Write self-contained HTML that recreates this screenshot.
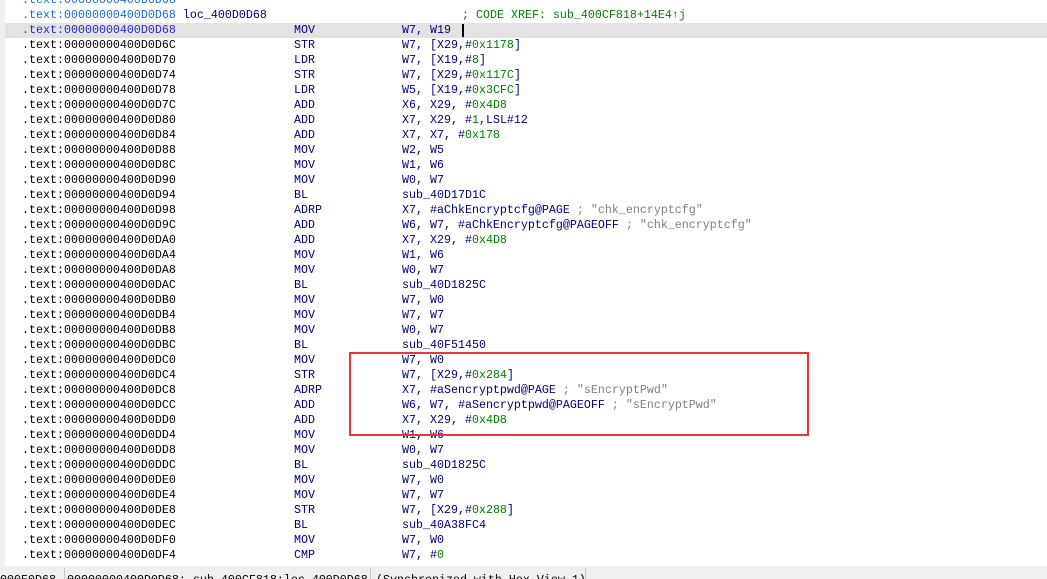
<!DOCTYPE html>
<html><head><meta charset="utf-8"><style>
html,body{margin:0;padding:0;}
body{width:1047px;height:579px;overflow:hidden;background:#fff;position:relative;font-family:"Liberation Mono",monospace;font-size:11.67px;}
.strip{position:absolute;left:0;top:0;width:5px;height:566px;background:#f0f0f0;}
.hl{position:absolute;left:5px;top:23px;width:1042px;height:15px;background:#e3e3e3;}
.r{position:absolute;height:15px;line-height:15px;white-space:pre;}
.a{left:22px;color:#000;}
.a1{color:#1a6bd6;}
.a2{color:#2a2ad0;}
.m{left:294px;color:#000080;}
.o{left:402px;color:#000080;}
.n{color:#008000;}
.s{color:#808080;}
.box{position:absolute;left:349px;top:352px;width:456px;height:80px;border:2px solid #e8363a;}
.cur{position:absolute;left:462px;top:24px;width:2px;height:13px;background:#000;}
.sb{position:absolute;left:0;top:566px;width:1047px;height:13px;background:#f0f0f0;overflow:hidden;}
.sb span{position:absolute;top:7px;line-height:15px;white-space:pre;color:#000;font-family:"Liberation Mono",monospace;}
.sep{position:absolute;top:2px;width:1px;height:13px;background:#c8c8c8;}
</style></head><body>
<div class="strip"></div>
<div class="hl"></div>
<div class="r a a1" style="top:-7px">.text:00000000400D0D68</div>
<div class="r a a1" style="top:8px">.text:00000000400D0D68 <span style="color:#000080">loc_400D0D68</span></div>
<div class="r" style="top:8px;left:462px;color:#008000">; CODE XREF: sub_400CF818+14E4↑j</div>
<div class="r a a2" style="top:23px">.text:00000000400D0D68</div>
<div class="r m" style="top:23px">MOV</div><div class="r o" style="top:23px">W7, W19</div>
<div class="cur"></div>

<div class="r a" style="top:38px">.text:00000000400D0D6C</div><div class="r m" style="top:38px">STR</div><div class="r o" style="top:38px">W7, [X29,#<span class="n">0x1178</span>]</div>
<div class="r a" style="top:53px">.text:00000000400D0D70</div><div class="r m" style="top:53px">LDR</div><div class="r o" style="top:53px">W7, [X19,#<span class="n">8</span>]</div>
<div class="r a" style="top:68px">.text:00000000400D0D74</div><div class="r m" style="top:68px">STR</div><div class="r o" style="top:68px">W7, [X29,#<span class="n">0x117C</span>]</div>
<div class="r a" style="top:83px">.text:00000000400D0D78</div><div class="r m" style="top:83px">LDR</div><div class="r o" style="top:83px">W5, [X19,#<span class="n">0x3CFC</span>]</div>
<div class="r a" style="top:98px">.text:00000000400D0D7C</div><div class="r m" style="top:98px">ADD</div><div class="r o" style="top:98px">X6, X29, #<span class="n">0x4D8</span></div>
<div class="r a" style="top:113px">.text:00000000400D0D80</div><div class="r m" style="top:113px">ADD</div><div class="r o" style="top:113px">X7, X29, #<span class="n">1</span>,LSL#12</div>
<div class="r a" style="top:128px">.text:00000000400D0D84</div><div class="r m" style="top:128px">ADD</div><div class="r o" style="top:128px">X7, X7, #<span class="n">0x178</span></div>
<div class="r a" style="top:143px">.text:00000000400D0D88</div><div class="r m" style="top:143px">MOV</div><div class="r o" style="top:143px">W2, W5</div>
<div class="r a" style="top:158px">.text:00000000400D0D8C</div><div class="r m" style="top:158px">MOV</div><div class="r o" style="top:158px">W1, W6</div>
<div class="r a" style="top:173px">.text:00000000400D0D90</div><div class="r m" style="top:173px">MOV</div><div class="r o" style="top:173px">W0, W7</div>
<div class="r a" style="top:188px">.text:00000000400D0D94</div><div class="r m" style="top:188px">BL</div><div class="r o" style="top:188px">sub_40D17D1C</div>
<div class="r a" style="top:203px">.text:00000000400D0D98</div><div class="r m" style="top:203px">ADRP</div><div class="r o" style="top:203px">X7, #aChkEncryptcfg@PAGE <span class="s">; "chk_encryptcfg"</span></div>
<div class="r a" style="top:218px">.text:00000000400D0D9C</div><div class="r m" style="top:218px">ADD</div><div class="r o" style="top:218px">W6, W7, #aChkEncryptcfg@PAGEOFF <span class="s">; "chk_encryptcfg"</span></div>
<div class="r a" style="top:233px">.text:00000000400D0DA0</div><div class="r m" style="top:233px">ADD</div><div class="r o" style="top:233px">X7, X29, #<span class="n">0x4D8</span></div>
<div class="r a" style="top:248px">.text:00000000400D0DA4</div><div class="r m" style="top:248px">MOV</div><div class="r o" style="top:248px">W1, W6</div>
<div class="r a" style="top:263px">.text:00000000400D0DA8</div><div class="r m" style="top:263px">MOV</div><div class="r o" style="top:263px">W0, W7</div>
<div class="r a" style="top:278px">.text:00000000400D0DAC</div><div class="r m" style="top:278px">BL</div><div class="r o" style="top:278px">sub_40D1825C</div>
<div class="r a" style="top:293px">.text:00000000400D0DB0</div><div class="r m" style="top:293px">MOV</div><div class="r o" style="top:293px">W7, W0</div>
<div class="r a" style="top:308px">.text:00000000400D0DB4</div><div class="r m" style="top:308px">MOV</div><div class="r o" style="top:308px">W7, W7</div>
<div class="r a" style="top:323px">.text:00000000400D0DB8</div><div class="r m" style="top:323px">MOV</div><div class="r o" style="top:323px">W0, W7</div>
<div class="r a" style="top:338px">.text:00000000400D0DBC</div><div class="r m" style="top:338px">BL</div><div class="r o" style="top:338px">sub_40F51450</div>
<div class="r a" style="top:353px">.text:00000000400D0DC0</div><div class="r m" style="top:353px">MOV</div><div class="r o" style="top:353px">W7, W0</div>
<div class="r a" style="top:368px">.text:00000000400D0DC4</div><div class="r m" style="top:368px">STR</div><div class="r o" style="top:368px">W7, [X29,#<span class="n">0x284</span>]</div>
<div class="r a" style="top:383px">.text:00000000400D0DC8</div><div class="r m" style="top:383px">ADRP</div><div class="r o" style="top:383px">X7, #aSencryptpwd@PAGE <span class="s">; "sEncryptPwd"</span></div>
<div class="r a" style="top:398px">.text:00000000400D0DCC</div><div class="r m" style="top:398px">ADD</div><div class="r o" style="top:398px">W6, W7, #aSencryptpwd@PAGEOFF <span class="s">; "sEncryptPwd"</span></div>
<div class="r a" style="top:413px">.text:00000000400D0DD0</div><div class="r m" style="top:413px">ADD</div><div class="r o" style="top:413px">X7, X29, #<span class="n">0x4D8</span></div>
<div class="r a" style="top:428px">.text:00000000400D0DD4</div><div class="r m" style="top:428px">MOV</div><div class="r o" style="top:428px">W1, W6</div>
<div class="r a" style="top:443px">.text:00000000400D0DD8</div><div class="r m" style="top:443px">MOV</div><div class="r o" style="top:443px">W0, W7</div>
<div class="r a" style="top:458px">.text:00000000400D0DDC</div><div class="r m" style="top:458px">BL</div><div class="r o" style="top:458px">sub_40D1825C</div>
<div class="r a" style="top:473px">.text:00000000400D0DE0</div><div class="r m" style="top:473px">MOV</div><div class="r o" style="top:473px">W7, W0</div>
<div class="r a" style="top:488px">.text:00000000400D0DE4</div><div class="r m" style="top:488px">MOV</div><div class="r o" style="top:488px">W7, W7</div>
<div class="r a" style="top:503px">.text:00000000400D0DE8</div><div class="r m" style="top:503px">STR</div><div class="r o" style="top:503px">W7, [X29,#<span class="n">0x288</span>]</div>
<div class="r a" style="top:518px">.text:00000000400D0DEC</div><div class="r m" style="top:518px">BL</div><div class="r o" style="top:518px">sub_40A38FC4</div>
<div class="r a" style="top:533px">.text:00000000400D0DF0</div><div class="r m" style="top:533px">MOV</div><div class="r o" style="top:533px">W7, W0</div>
<div class="r a" style="top:548px">.text:00000000400D0DF4</div><div class="r m" style="top:548px">CMP</div><div class="r o" style="top:548px">W7, #<span class="n">0</span></div>
<div class="box"></div>
<div class="sb">
<span style="left:0">000E0D68</span><div class="sep" style="left:64px"></div>
<span style="left:67px">00000000400D0D68: sub_400CF818:loc_400D0D68</span><div class="sep" style="left:370px"></div>
<span style="left:376px">(Synchronized with Hex View-1)</span><div class="sep" style="left:585px"></div>
</div>
</body></html>
